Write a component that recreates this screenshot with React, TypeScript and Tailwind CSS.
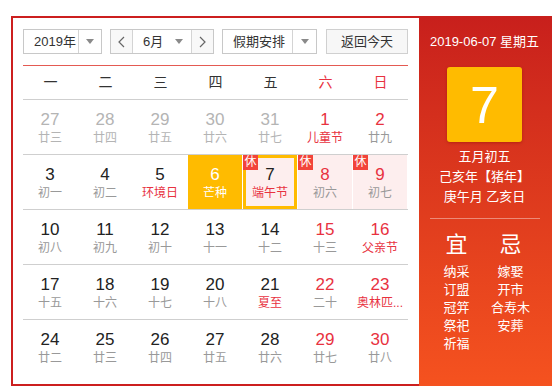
import React from 'react';

type Day = {
    n: number;
    lunar: string;
    kind?: 'prev' | 'red';
    lunarRed?: boolean;
    today?: boolean;
    selected?: boolean;
    rest?: boolean;
};

const weeks: Day[][] = [
    [
        { n: 27, lunar: '廿三', kind: 'prev' },
        { n: 28, lunar: '廿四', kind: 'prev' },
        { n: 29, lunar: '廿五', kind: 'prev' },
        { n: 30, lunar: '廿六', kind: 'prev' },
        { n: 31, lunar: '廿七', kind: 'prev' },
        { n: 1, lunar: '儿童节', kind: 'red', lunarRed: true },
        { n: 2, lunar: '廿九', kind: 'red' },
    ],
    [
        { n: 3, lunar: '初一' },
        { n: 4, lunar: '初二' },
        { n: 5, lunar: '环境日', lunarRed: true },
        { n: 6, lunar: '芒种', today: true },
        { n: 7, lunar: '端午节', lunarRed: true, selected: true, rest: true },
        { n: 8, lunar: '初六', kind: 'red', rest: true },
        { n: 9, lunar: '初七', kind: 'red', rest: true },
    ],
    [
        { n: 10, lunar: '初八' },
        { n: 11, lunar: '初九' },
        { n: 12, lunar: '初十' },
        { n: 13, lunar: '十一' },
        { n: 14, lunar: '十二' },
        { n: 15, lunar: '十三', kind: 'red' },
        { n: 16, lunar: '父亲节', kind: 'red', lunarRed: true },
    ],
    [
        { n: 17, lunar: '十五' },
        { n: 18, lunar: '十六' },
        { n: 19, lunar: '十七' },
        { n: 20, lunar: '十八' },
        { n: 21, lunar: '夏至', lunarRed: true },
        { n: 22, lunar: '二十', kind: 'red' },
        { n: 23, lunar: '奥林匹...', kind: 'red', lunarRed: true },
    ],
    [
        { n: 24, lunar: '廿二' },
        { n: 25, lunar: '廿三' },
        { n: 26, lunar: '廿四' },
        { n: 27, lunar: '廿五' },
        { n: 28, lunar: '廿六' },
        { n: 29, lunar: '廿七', kind: 'red' },
        { n: 30, lunar: '廿八', kind: 'red' },
    ],
];

const weekdays = ['一', '二', '三', '四', '五', '六', '日'];

const Caret = () => (
    <span className="w-0 h-0 border-x-[4px] border-x-transparent border-t-[5px] border-t-[#8a8a8a]" />
);

const Chevron = ({ dir }: { dir: 'left' | 'right' }) => (
    <svg width="7" height="12" viewBox="0 0 7 12">
        <polyline
            points={dir === 'left' ? '6,1 1,6 6,11' : '1,1 6,6 1,11'}
            fill="none"
            stroke="#666"
            strokeWidth="1.2"
        />
    </svg>
);

const DayCell = ({ d }: { d: Day }) => {
    let numColor = 'text-[#222]';
    if (d.kind === 'prev') numColor = 'text-[#b4b4b4]';
    if (d.kind === 'red') numColor = 'text-[#e8323f]';
    let lunarColor = d.kind === 'prev' ? 'text-[#b4b4b4]' : 'text-[#999]';
    if (d.lunarRed) lunarColor = 'text-[#e8323f]';
    if (d.today) {
        numColor = 'text-white';
        lunarColor = 'text-white';
    }
    let bg = '';
    if (d.today) bg = 'bg-[#ffbb00]';
    else if (d.rest) bg = 'bg-[#fdeeee]';
    return (
        <div className="h-[54px] pr-px">
            <div
                className={`relative h-full pt-[10px] text-center ${bg} ${
                    d.selected ? 'shadow-[inset_0_0_0_3px_#ffbb00]' : ''
                }`}
            >
                {d.rest && (
                    <span className="absolute left-0 top-0 w-[15px] h-[15px] bg-[#f2443a] text-white text-[12px] leading-[15px] text-center">
                        休
                    </span>
                )}
                <div className={`text-[17px] leading-[20px] ${numColor}`}>{d.n}</div>
                <div className={`text-[12px] leading-[16px] whitespace-nowrap ${lunarColor}`}>{d.lunar}</div>
            </div>
        </div>
    );
};

export default function App() {
    return (
        <div className="w-[552px] h-[390px] overflow-hidden bg-white font-['Liberation_Sans','Noto_Sans_CJK_SC',sans-serif]">
            <div className="flex ml-[11px] mt-[16px] h-[370px]">
                {/* left calendar */}
                <div className="w-[408px] border-2 border-r-0 border-[#cc1f1f] bg-white pl-[10px] pr-[11px] pt-[11px]">
                    <div className="flex items-center h-[25px] text-[13px] text-[#333]">
                        <div className="flex h-full w-[79px] border border-[#c8c8c8]">
                            <div className="flex-1 flex items-center pl-[10px]">2019年</div>
                            <div className="w-[23px] flex items-center justify-center border-l border-[#d4d4d4]">
                                <Caret />
                            </div>
                        </div>
                        <div className="flex h-full w-[104px] ml-[8px] border border-[#c8c8c8]">
                            <div className="w-[22px] flex items-center justify-center bg-[#f8f8f8] border-r border-[#d4d4d4]">
                                <Chevron dir="left" />
                            </div>
                            <div className="flex-1 flex items-center justify-between pl-[10px] pr-[8px]">
                                <span>6月</span>
                                <Caret />
                            </div>
                            <div className="w-[22px] flex items-center justify-center bg-[#f8f8f8] border-l border-[#d4d4d4]">
                                <Chevron dir="right" />
                            </div>
                        </div>
                        <div className="flex h-full w-[95px] ml-[8px] border border-[#c8c8c8]">
                            <div className="flex-1 flex items-center pl-[10px]">假期安排</div>
                            <div className="w-[24px] flex items-center justify-center border-l border-[#d4d4d4]">
                                <Caret />
                            </div>
                        </div>
                        <div className="flex h-full w-[82px] ml-[9px] items-center justify-center border border-[#d0d0d0] bg-[#f7f7f7]">
                            返回今天
                        </div>
                    </div>

                    <div className="mt-[11px] h-px bg-[#e45a52]" />

                    <div className="grid grid-cols-7 h-[33px] items-center text-center text-[14px]">
                        {weekdays.map((w, i) => (
                            <div key={w} className={i >= 5 ? 'text-[#e8323f]' : 'text-[#333]'}>
                                {w}
                            </div>
                        ))}
                    </div>

                    {weeks.map((week, wi) => (
                        <div key={wi} className="grid grid-cols-7 border-t border-[#cfcfcf]">
                            {week.map((d, di) => (
                                <DayCell key={di} d={d} />
                            ))}
                        </div>
                    ))}
                </div>

                {/* right detail panel */}
                <div className="w-[133px] pr-[2px] bg-gradient-to-b from-[#c81f1c] to-[#f5521f] text-white flex flex-col items-center">
                    <div className="mt-[16px] text-[13px] leading-[20px] whitespace-nowrap">2019-06-07 星期五</div>
                    <div className="mt-[15px] w-[75px] h-[75px] rounded-[3px] bg-[#ffbb00] shadow-[0_1px_3px_rgba(120,0,0,0.35)] flex items-center justify-center text-[52px] leading-none">
                        7
                    </div>
                    <div className="mt-[5px] text-[13px] leading-[20px] text-center whitespace-nowrap">
                        <div>五月初五</div>
                        <div>己亥年【猪年】</div>
                        <div>庚午月 乙亥日</div>
                    </div>
                    <div className="mt-[11px] w-[110px] h-px bg-white/40" />
                    <div className="mt-[12px] grid grid-cols-2 w-[108px] -ml-[2px] text-center">
                        <div>
                            <div className="text-[22px] leading-[28px]">宜</div>
                            <div className="mt-[4px] text-[13px] leading-[18px]">
                                <div>纳采</div>
                                <div>订盟</div>
                                <div>冠笄</div>
                                <div>祭祀</div>
                                <div>祈福</div>
                            </div>
                        </div>
                        <div>
                            <div className="text-[22px] leading-[28px]">忌</div>
                            <div className="mt-[4px] text-[13px] leading-[18px] whitespace-nowrap">
                                <div>嫁娶</div>
                                <div>开市</div>
                                <div>合寿木</div>
                                <div>安葬</div>
                            </div>
                        </div>
                    </div>
                </div>
            </div>
        </div>
    );
}
